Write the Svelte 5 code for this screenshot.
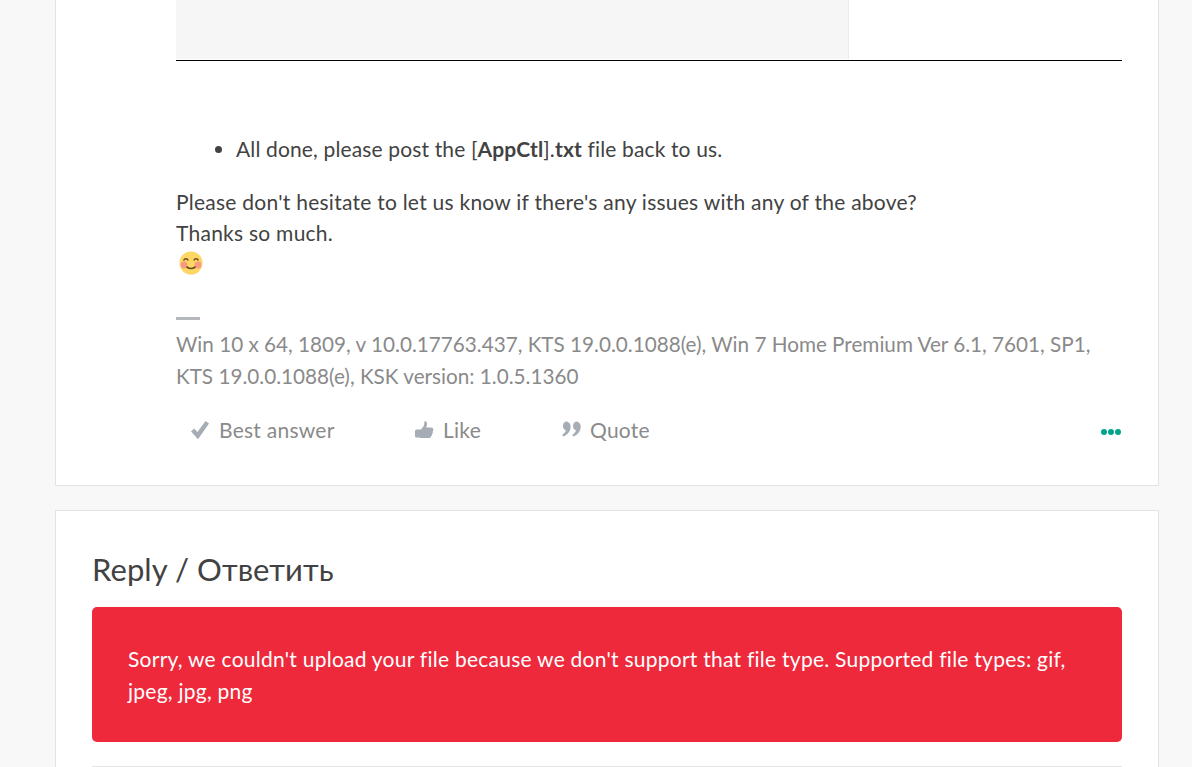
<script>
  const actions = [
    { label: 'Best answer', icon: 'check', width: 224 },
    { label: 'Like', icon: 'thumb', width: 147 },
    { label: 'Quote', icon: 'quote', width: 120 }
  ];
</script>

<div class="page">
  <article class="card post">
    <div class="attachment">
      <div class="shot"></div>
    </div>

    <ul class="steps">
      <li>All done, please post the [<b>AppCtl</b>].<b>txt</b> file back to us.</li>
    </ul>

    <p class="body">
      Please don't hesitate to let us know if there's any issues with any of the above?<br />
      Thanks so much.
    </p>

    <svg class="emoji" viewBox="0 0 24 24" width="24" height="24" aria-hidden="true">
      <circle cx="12" cy="12" r="11.5" fill="#fdd663" />
      <circle cx="5" cy="14" r="3.4" fill="#f99a83" />
      <circle cx="19" cy="14" r="3.4" fill="#f99a83" />
      <path d="M4.6 9.6c1-2.6 3.6-2.6 4.6 0M14.8 9.6c1-2.6 3.6-2.6 4.6 0" fill="none" stroke="#6a4c1e" stroke-width="1.5" />
      <path d="M7.5 15.600c2.400 2.600 6.600 2.600 9 0" fill="none" stroke="#6a4c1e" stroke-width="1.6" />
    </svg>

    <div class="sig-rule"></div>
    <p class="signature">
      Win 10 x 64, 1809, v 10.0.17763.437, KTS 19.0.0.1088(e), Win 7 Home Premium Ver 6.1, 7601, SP1,
      KTS 19.0.0.1088(e), KSK version: 1.0.5.1360
    </p>

    <div class="actions">
      {#each actions as a}
        <span class="action" style="width: {a.width}px">
          <span class="ico">
            {#if a.icon === 'check'}
              <svg viewBox="0 0 20 20" width="20" height="20"><path d="M1 11.500l3.200-3 3.200 3.600L15.600 1 19 3.400 8 19.200z" fill="#a7adb4" /></svg>
            {:else if a.icon === 'thumb'}
              <svg viewBox="0 0 20 20" width="20" height="20"><path d="M1 11q0-1.500 1.500-1.500H7L10 5.500 10.600 1c2.600 0 3.200 3 1.600 6.500H17q2.400 0 2.400 2 0 1-.6 1.500.6 1.600-.6 2.400.4 1.600-.8 2.300 0 2.300-2.400 2.300H7q-1 0-1.600-.5H2.500Q1 17.500 1 16z" fill="#a7adb4" /></svg>
            {:else}
              <svg viewBox="0 0 20 20" width="20" height="20"><path d="M4.900 1.600a4.700 4.700 0 0 1 4.700 4.800c0 4.800-3.100 8.700-7.500 10l-.9-1.700c2-1 3.300-2.500 3.700-4.400A4.700 4.700 0 0 1 4.900 1.600zM15 1.600a4.700 4.700 0 0 1 4.700 4.800c0 4.800-3.100 8.700-7.500 10l-.9-1.700c2-1 3.300-2.500 3.700-4.400A4.700 4.700 0 0 1 15 1.600z" fill="#a7adb4" /></svg>
            {/if}
          </span>
          {a.label}
        </span>
      {/each}
      <span class="more"><i></i><i></i><i></i></span>
    </div>
  </article>

  <section class="card reply">
    <h2>Reply / Ответить</h2>
    <div class="error">
      Sorry, we couldn't upload your file because we don't support that file type. Supported file types: gif, jpeg, jpg, png
    </div>
    <div class="editor-top"></div>
  </section>
</div>

<style>
  :global(body) {
    background: #f8f8f8;
    font-family: Lato, "Open Sans", sans-serif;
    color: #424242;
  }

  .page {
    height: 767px;
    overflow: hidden;
    padding: 0 33px 0 55px;
    box-sizing: border-box;
  }

  .card {
    background: #fff;
    border: 1px solid #e3e3e3;
  }

  .post {
    border-top: 0;
    height: 486px;
    box-sizing: border-box;
    padding: 0 36px 0 120px;
  }

  .attachment {
    height: 61px;
    border-bottom: 1px solid #000;
    box-sizing: border-box;
  }

  .shot {
    width: 673px;
    height: 59px;
    box-sizing: border-box;
    background: #f6f6f6;
    border-right: 1px solid #ececec;
  }

  .steps {
    margin: 74px 0 0;
    padding: 0 0 0 60px;
    font-size: 21px;
    letter-spacing: 0.14px;
    line-height: 28px;
  }

  .steps b {
    font-weight: 700;
  }

  .body {
    margin: 23px 0 0;
    font-size: 21px;
    letter-spacing: 0.25px;
    line-height: 31px;
  }

  .emoji {
    display: block;
    margin: 3px 0 0 3px;
  }

  .sig-rule {
    width: 24px;
    height: 3px;
    background: #b5b8bc;
    margin-top: 42px;
  }

  .signature {
    margin: 8px 0 0;
    font-size: 20.7px;
    line-height: 32px;
    color: #8a8a8a;
  }

  .actions {
    display: flex;
    align-items: center;
    margin-top: 23px;
    padding-left: 14px;
    font-size: 21px;
    letter-spacing: 0.25px;
    line-height: 30px;
    color: #8a8a8a;
  }

  .action {
    display: flex;
    align-items: center;
    gap: 9px;
    flex: none;
  }

  .ico {
    display: flex;
  }

  .more {
    margin-left: auto;
    display: flex;
    gap: 1px;
    margin-right: 1px;
    margin-top: 3px;
  }

  .more i {
    width: 6px;
    height: 6px;
    border-radius: 50%;
    background: #00a48a;
  }

  .reply {
    margin-top: 24px;
    height: 400px;
    padding: 0 36px;
  }

  h2 {
    margin: 36px 0 0;
    font-size: 31px;
    letter-spacing: 0.06px;
    line-height: 44px;
    font-weight: 400;
    color: #424242;
  }

  .error {
    margin-top: 16px;
    height: 135px;
    box-sizing: border-box;
    padding: 36px;
    border-radius: 5px;
    background: #ee293b;
    color: #fff;
    font-size: 21px;
    letter-spacing: 0.25px;
    line-height: 32px;
  }

  .editor-top {
    margin-top: 24px;
    border-top: 1px solid #e3e3e3;
  }
</style>
